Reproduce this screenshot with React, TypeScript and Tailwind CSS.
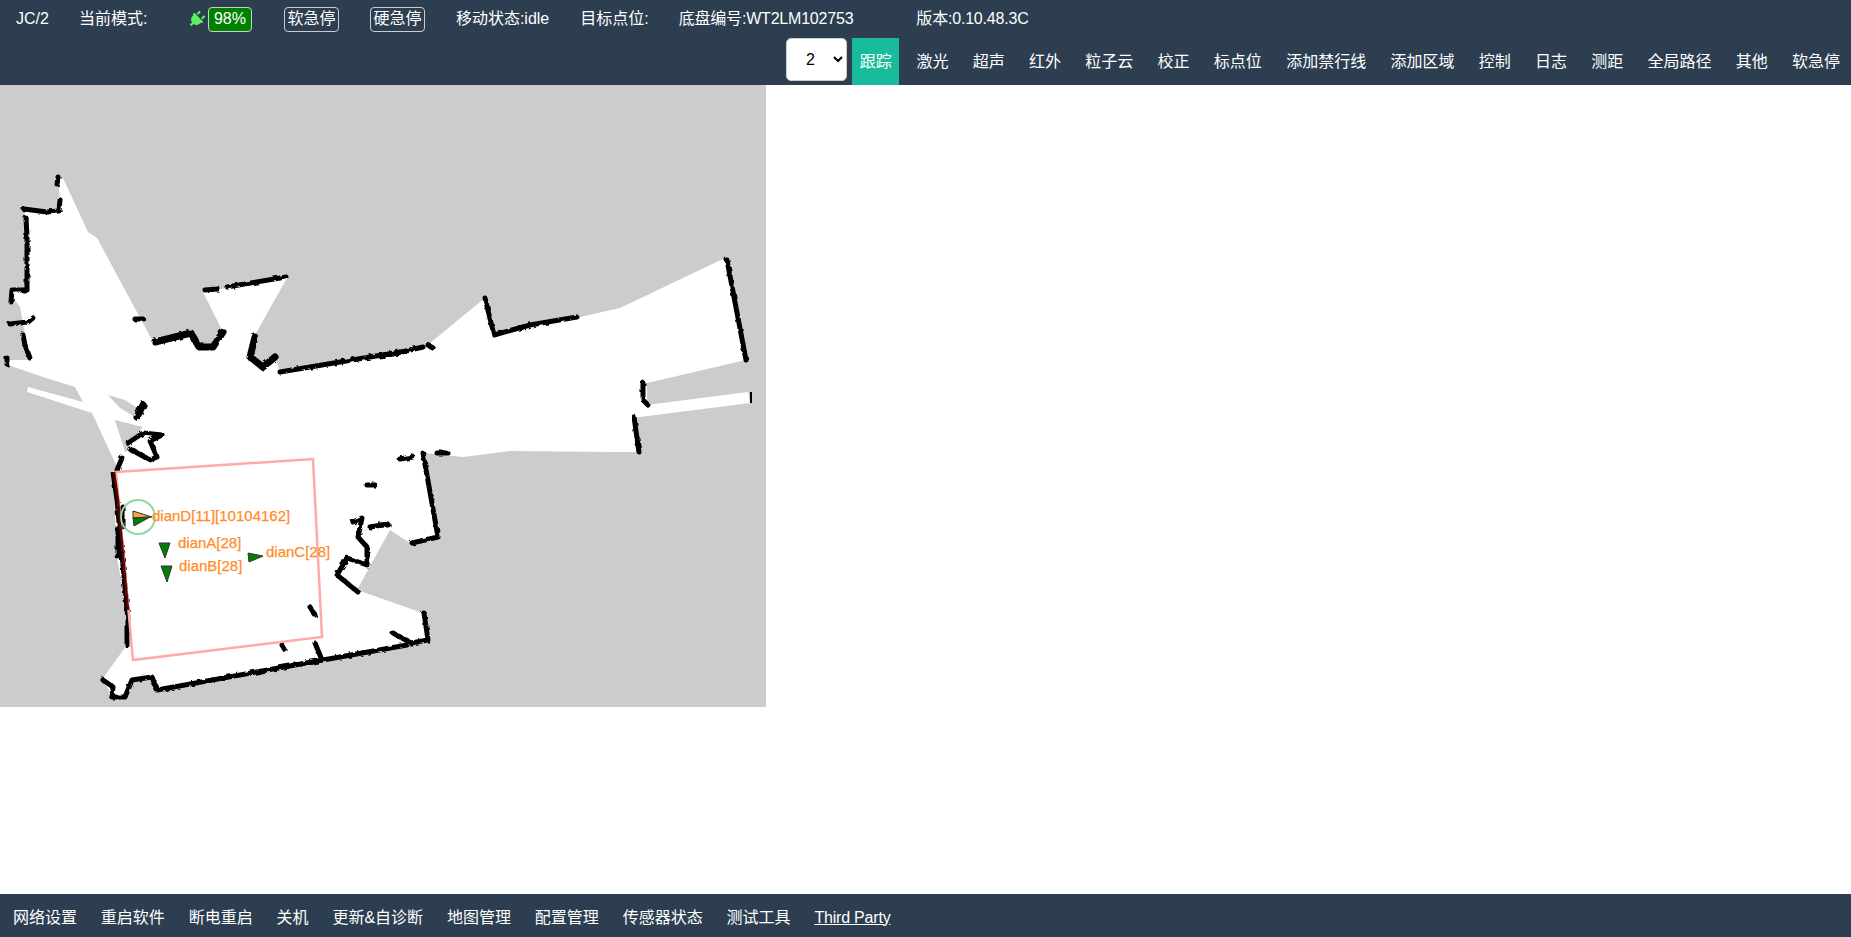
import React from 'react';
import { FaPlug } from 'react-icons/fa';

const tabs = ['激光', '超声', '红外', '粒子云', '校正', '标点位', '添加禁行线', '添加区域', '控制', '日志', '测距', '全局路径', '其他', '软急停'];
const footerLinks = ['网络设置', '重启软件', '断电重启', '关机', '更新&自诊断', '地图管理', '配置管理', '传感器状态', '测试工具'];

const freeSpace =
  '63,178 88,232 97,238 152,340 191,333 199,347 213,347 223,332 203,292 287,278 255,335 250,357 263,367 275,357 280,372 400,352 430,343 485,298 494,335 580,317 620,308 725,258 746,360 647,383 647,405 748,392 750,403 640,417 633,417 639,452 613,452 510,451 463,457 425,453 438,537 410,543 390,530 357,590 423,613 428,640 407,645 323,660 157,690 152,677 132,680 125,697 112,697 103,678 127,645 128,620 117,557 113,472 117,467 92,413 27,392 28,387 83,402 75,387 43,377 8,365 8,360 30,360 20,307 10,293 25,290 25,215 23,210 60,212 60,200 58,180';

const holes = ['108,395 125,400 145,413 135,417 120,408', '115,420 143,427 130,443 128,450 125,452'];

const thinWalls = [
  '58,177 57,184',
  '60,200 59,211 47,212 24,209',
  '26,218 27,237 27,290 12,290 11,302',
  '33,318 28,322 10,324',
  '23,335 25,345 30,358',
  '7,358 7,364',
  '135,319 143,319',
  '205,290 218,289',
  '227,287 286,277',
  '400,352 280,372',
  '380,357 423,347',
  '428,345 433,348',
  '485,298 494,335 530,325 577,317',
  '727,260 746,360',
  '643,383 643,400 648,405',
  '634,417 639,452',
  '400,459 413,457',
  '423,453 438,537 412,543',
  '437,453 448,453',
  '380,525 388,525',
  '424,613 428,640 411,643 393,633',
  '407,645 323,660 157,690 152,677 132,680 125,697 112,697 113,687 103,680',
  '315,643 322,660',
  '282,645 285,650',
  '310,607 315,615',
  '367,485 375,485',
  '353,522 362,518 358,537 367,547 367,565 347,558 337,575 358,592',
  '370,527 388,524',
  '127,620 127,645',
  '123,507 123,527',
  '118,527 118,557',
  '128,443 143,433 162,435 150,441 157,457 150,460 130,449',
  '122,458 117,470',
];

const thickWalls = ['155,342 191,333 199,347 213,347 223,332', '255,337 250,357 263,367 275,357', '143,405 137,417'];

function RobotMap() {
  return (
    <svg viewBox="0 85 766 622" className="block w-[766px] h-[622px] bg-[#cccccc]">
      <defs>
        {/* laser scan walls are not clean lines, rough them up a bit */}
        <filter id="rough" x="0" y="85" width="766" height="622" filterUnits="userSpaceOnUse">
          <feTurbulence type="fractalNoise" baseFrequency="0.18" numOctaves="2" seed="4" />
          <feDisplacementMap in="SourceGraphic" scale="3.5" />
        </filter>
      </defs>
      <polygon points={freeSpace} fill="#fff" />
      {holes.map((p) => (
        <polygon key={p} points={p} fill="#cccccc" />
      ))}
      <g filter="url(#rough)">
        {thinWalls.map((p) => (
          <polyline key={p} points={p} fill="none" stroke="#000" strokeWidth="5" strokeLinejoin="round" strokeLinecap="round" />
        ))}
        {thickWalls.map((p) => (
          <polyline key={p} points={p} fill="none" stroke="#000" strokeWidth="7" strokeLinejoin="round" strokeLinecap="round" />
        ))}
        <polyline points="113,472 117,500 128,620" fill="none" stroke="#000" strokeWidth="5" />
      </g>
      <line x1="751" y1="392" x2="751" y2="403" stroke="#000" strokeWidth="2" />
      <polygon points="116,472 313,459 322,637 133,660" fill="none" stroke="#ffaaaa" strokeWidth="2.5" />
      <polyline points="114,472 118,500 128,610" fill="none" stroke="#600000" strokeWidth="2.5" />
      <circle cx="138" cy="517" r="17" fill="none" stroke="#8fd8a0" strokeWidth="2" />
      <polygon points="133,511 152,517 133,518" fill="#ffa040" stroke="#333" />
      <polygon points="133,518 150,517 134,526" fill="#008000" stroke="#333" />
      <polygon points="159,543 170,543 165,558" fill="#008000" stroke="#333" />
      <polygon points="161,566 172,566 167,582" fill="#008000" stroke="#333" />
      <polygon points="248,553 263,556 249,562" fill="#008000" stroke="#333" />
      <g fill="#ff8c2a" stroke="#ff8c2a" strokeWidth="0.25" fontSize="15" fontFamily="'Liberation Sans', sans-serif">
        <text x="152" y="521">dianD[11][10104162]</text>
        <text x="178" y="548">dianA[28]</text>
        <text x="179" y="571">dianB[28]</text>
        <text x="266" y="557">dianC[28]</text>
      </g>
    </svg>
  );
}

export default function App() {
  return (
    <div className="h-screen flex flex-col bg-white text-white text-base font-['Liberation_Sans','Noto_Sans_CJK_SC',sans-serif]">
      {/* Top bar */}
      <div className="h-[85px] shrink-0 bg-[#2c3e50]">
        <div className="h-[38px] flex items-center pl-[16px] whitespace-nowrap">
          <span>JC/2</span>
          <span className="ml-[30px] w-[70px]">当前模式:</span>
          <FaPlug className="ml-[39px] w-[17px] h-[17px] text-[#5df05d] rotate-45" />
          <span className="ml-[3px] h-[25px] w-[44px] flex items-center justify-center rounded border border-[#ccc] bg-[#008000]">98%</span>
          <span className="ml-8 h-[25px] w-[55px] flex items-center justify-center rounded border border-[#ccc]">软急停</span>
          <span className="ml-[31px] h-[25px] w-[55px] flex items-center justify-center rounded border border-[#ccc]">硬急停</span>
          <span className="ml-[31px]">移动状态:idle</span>
          <span className="ml-[31px]">目标点位:</span>
          <span className="ml-[30px] tracking-[-0.2px]">底盘编号:WT2LM102753</span>
          <span className="ml-[63px] tracking-[-0.2px]">版本:0.10.48.3C</span>
        </div>
        <div className="h-[47px] flex justify-end gap-[8.25px] pr-[3px] whitespace-nowrap">
          <select defaultValue="2" className="w-[61px] h-[43px] pl-[15px] rounded-[5px] border border-[#ccc] bg-white text-black">
            <option>1</option>
            <option>2</option>
            <option>3</option>
          </select>
          <a className="flex items-center -ml-[3px] mr-[1px] px-[7.5px] bg-[#18bc9c]">跟踪</a>
          {tabs.map((tab) => (
            <a key={tab} className="flex items-center px-2">
              {tab}
            </a>
          ))}
        </div>
      </div>

      {/* Map */}
      <div className="flex-1 min-h-0">
        <RobotMap />
      </div>

      {/* Bottom bar */}
      <div className="h-[43px] shrink-0 flex items-center gap-[23.85px] pl-[13px] pt-[4px] bg-[#2c3e50] whitespace-nowrap">
        {footerLinks.map((link) => (
          <a key={link}>{link}</a>
        ))}
        <a className="underline tracking-[-0.2px]">Third Party</a>
      </div>
    </div>
  );
}
